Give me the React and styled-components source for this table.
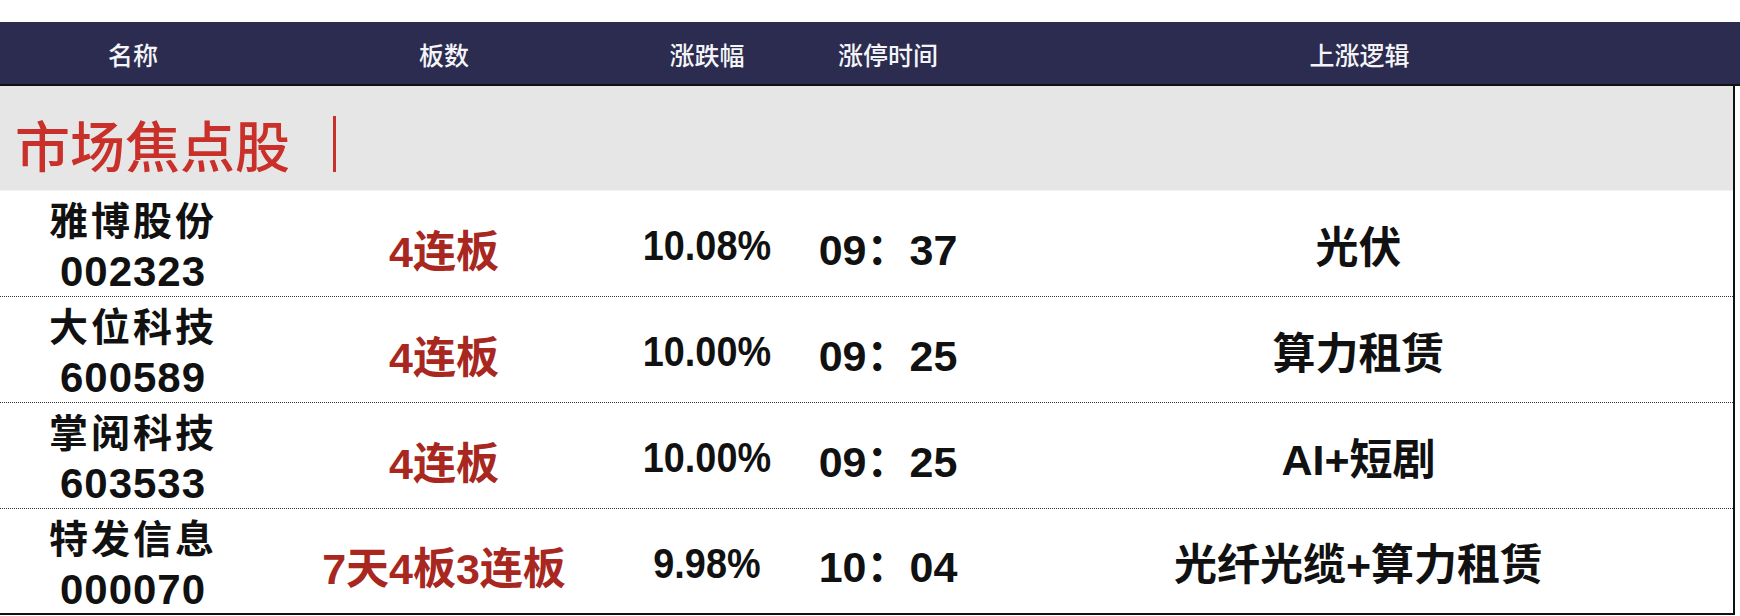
import React from "react"
import styled, { createGlobalStyle } from "styled-components"

const GlobalStyle = createGlobalStyle`
  html, body {
    margin: 0;
    padding: 0;
    background: #ffffff;
  }
  body {
    font-family: "Liberation Sans", "Noto Sans CJK SC", sans-serif;
  }
`

const gridTemplate = "266px 356px 170px 192px 1fr"

const Page = styled.div`
  padding-top: 22px;
  width: 1740px;
`

const HeaderBar = styled.div`
  display: grid;
  grid-template-columns: ${gridTemplate} 5px;
  background: #2b2c4f;
  border-bottom: 2px solid #111;
  box-sizing: border-box;
  height: 64px;
`

const HeadCell = styled.div`
  display: flex;
  align-items: center;
  justify-content: center;
  padding-top: 2px;
  color: #f4f4f8;
  font-family: "Noto Sans CJK SC", sans-serif;
  font-weight: 500;
  font-size: 25px;
`

const Table = styled.div`
  width: 1735px;
  border-right: 2px solid #111;
  box-sizing: border-box;
`

const SectionBand = styled.div`
  display: flex;
  align-items: center;
  height: 105px;
  background: #e6e6e6;
  border-bottom: 1px solid #f2f2f2;
  padding-left: 15px;
  box-sizing: border-box;
`

const SectionTitle = styled.span`
  color: #c9302a;
  font-family: "Liberation Serif", "Noto Sans CJK SC", serif;
  font-weight: 500;
  font-size: 55px;
  margin-top: 10px;
`

const TitleBar = styled.span`
  display: inline-block;
  width: 3px;
  height: 56px;
  margin-left: 43px;
  margin-top: 12px;
  background: #c9302a;
`

const Row = styled.div`
  display: grid;
  grid-template-columns: ${gridTemplate};
  height: 106px;
  box-sizing: border-box;
  border-bottom: ${p => (p.$last ? "2px solid #111" : "1px dotted #333")};
`

const Cell = styled.div`
  display: flex;
  flex-direction: column;
  align-items: center;
  justify-content: ${p => (p.$top ? "flex-start" : "center")};
  padding-top: ${p => (p.$top ? "3px" : "0")};
  color: #111;
  white-space: nowrap;
`

const NameLine = styled.div`
  font-family: "Noto Sans CJK SC", sans-serif;
  font-weight: 700;
  font-size: 39px;
  letter-spacing: 3px;
  line-height: 48px;
`

const CodeLine = styled.div`
  font-family: "Liberation Sans", sans-serif;
  font-weight: 700;
  font-size: 42px;
  letter-spacing: 1px;
  line-height: 40px;
  margin-top: 10px;
`

const Boards = styled.div`
  color: #a8271f;
  font-family: "Liberation Sans", "Noto Sans CJK SC", sans-serif;
  font-weight: 700;
  font-size: 43px;
  margin-top: 8px;
`

const Num = styled.div`
  font-family: "Liberation Sans", "Noto Sans CJK SC", sans-serif;
  font-weight: 700;
  font-size: 43px;
  margin-top: 4px;
  transform: scaleX(${p => p.$squeeze});
`

const Logic = styled.div`
  font-family: "Liberation Sans", "Noto Sans CJK SC", sans-serif;
  font-weight: 700;
  font-size: 43px;
`

const heads = ["名称", "板数", "涨跌幅", "涨停时间", "上涨逻辑"]

const stocks = [
  { name: "雅博股份", code: "002323", boards: "4连板", pct: "10.08%", time: "09：37", logic: "光伏" },
  { name: "大位科技", code: "600589", boards: "4连板", pct: "10.00%", time: "09：25", logic: "算力租赁" },
  { name: "掌阅科技", code: "603533", boards: "4连板", pct: "10.00%", time: "09：25", logic: "AI+短剧" },
  { name: "特发信息", code: "000070", boards: "7天4板3连板", pct: "9.98%", time: "10：04", logic: "光纤光缆+算力租赁" },
]

const App = () => {
  return (
    <Page>
      <GlobalStyle />
      <HeaderBar>
        {heads.map(h => (
          <HeadCell key={h}>{h}</HeadCell>
        ))}
      </HeaderBar>
      <Table>
        <SectionBand>
          <SectionTitle>市场焦点股</SectionTitle>
          <TitleBar />
        </SectionBand>
        {stocks.map((s, i) => (
          <Row key={s.code} $last={i === stocks.length - 1}>
            <Cell $top>
              <NameLine>{s.name}</NameLine>
              <CodeLine>{s.code}</CodeLine>
            </Cell>
            <Cell>
              <Boards>{s.boards}</Boards>
            </Cell>
            <Cell>
              <Num $squeeze={0.88}>{s.pct}</Num>
            </Cell>
            <Cell>
              <Num $squeeze={1}>{s.time}</Num>
            </Cell>
            <Cell>
              <Logic>{s.logic}</Logic>
            </Cell>
          </Row>
        ))}
      </Table>
    </Page>
  )
}

export default App
